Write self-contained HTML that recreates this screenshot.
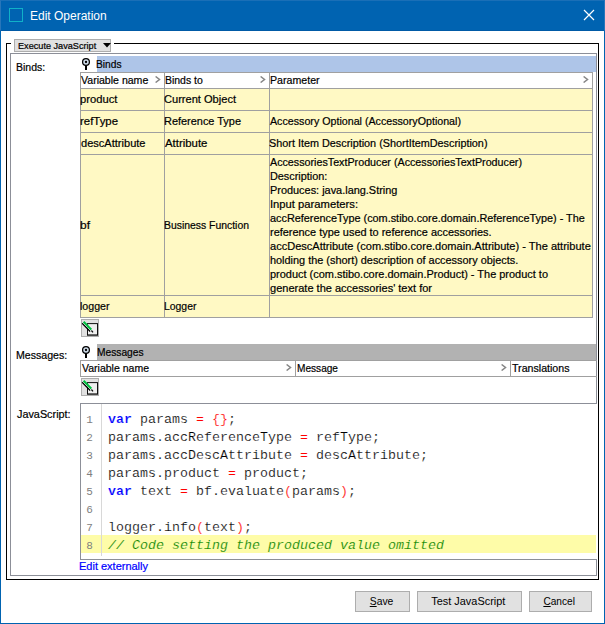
<!DOCTYPE html>
<html><head><meta charset="utf-8">
<style>
*{box-sizing:border-box;margin:0;padding:0}
html,body{width:605px;height:624px;overflow:hidden;background:#fff}
body{font-family:"Liberation Sans",sans-serif;font-size:11px;color:#000;position:relative}
.abs{position:absolute}
.t{position:absolute;white-space:nowrap;line-height:13px;height:13px;transform-origin:0 0;-webkit-text-stroke:0.2px currentColor}
#win{position:absolute;left:0;top:0;width:605px;height:624px;border:1px solid #0063b1;border-top:none}
#title{position:absolute;left:0;top:0;width:605px;height:31px;background:#0063b1;border-top:1px solid #1a6fb7;border-left:1px solid #2876ba;border-right:1px solid #2876ba;border-bottom:1px solid #005aa6}
#title .txt{position:absolute;left:29px;top:8px;color:#fff;font-size:12px;line-height:15px;white-space:nowrap}
.code{font-family:"Liberation Mono",monospace;font-size:13.333px;line-height:20.225px;white-space:pre;position:absolute;transform:scaleY(0.89);transform-origin:0 0;-webkit-text-stroke:0.2px #fff}
.lnum{font-family:"Liberation Mono",monospace;font-size:11px;line-height:18px;white-space:pre;position:absolute;color:#808080}
.kw{color:#0000ff;font-weight:bold}
.rd{color:#ff0000}
.cm{color:#008000;font-style:italic;-webkit-text-stroke-color:#fefca8}
.ln{color:#808080}
.btn{position:absolute;top:591px;height:21px;background:#e1e1e1;border:1px solid #adadad;text-align:center;padding-right:2px;line-height:19px;font-size:11px;white-space:nowrap}
.hl{position:absolute;background:#a0a0a0}
.vl{position:absolute;background:#a0a0a0;width:1px}
</style></head><body>
<div id="win"></div>
<div id="title">
  <div class="abs" style="left:8px;top:7px;width:14px;height:14px;border:1px solid #10b1c8"></div>
  <div class="txt">Edit Operation</div>
  <svg class="abs" style="left:582px;top:8px" width="12" height="12" viewBox="0 0 12 12"><path d="M1 1 L11 11 M11 1 L1 11" stroke="#fff" stroke-width="1.2" fill="none"/></svg>
</div>

<!-- outer black titled border -->
<div class="abs" style="left:6px;top:43px;width:593px;height:537px;border:1px solid #000"></div>
<!-- inner gray border -->
<div class="abs" style="left:10px;top:53px;width:587px;height:523px;border:1px solid #8c8f98"></div>
<!-- combo -->
<div class="abs" style="left:11px;top:38px;width:103px;height:15px;background:#fff"></div>
<div class="abs" style="left:14px;top:39px;width:97px;height:13px;background:#e1e1e1;border:1px solid #adadad"></div>
<svg class="abs" style="left:103px;top:43px" width="8" height="5" viewBox="0 0 8 5"><path d="M0 0 H8 L4 4.5 Z" fill="#000"/></svg>

<!-- Binds header band -->
<div class="abs" style="left:97px;top:56px;width:499px;height:16px;background:#aec5e8"></div>
<svg class="abs" style="left:81px;top:57px" width="11" height="14" viewBox="0 0 11 14"><circle cx="5" cy="5" r="3.4" fill="#cddae8" stroke="#000" stroke-width="1.25"/><circle cx="5" cy="5" r="1.15" fill="#000"/><path d="M5 8.5 V13" stroke="#000" stroke-width="2"/></svg>

<!-- Binds table -->
<div class="abs" style="left:81px;top:89px;width:512px;height:229px;background:#fff9c4"></div>
<div class="hl" style="left:80px;top:72px;width:513px;height:1px"></div>
<div class="hl" style="left:80px;top:88px;width:513px;height:1px"></div>
<div class="hl" style="left:80px;top:110px;width:513px;height:1px"></div>
<div class="hl" style="left:80px;top:132px;width:513px;height:1px"></div>
<div class="hl" style="left:80px;top:154px;width:513px;height:1px"></div>
<div class="hl" style="left:80px;top:295px;width:513px;height:1px"></div>
<div class="hl" style="left:80px;top:317px;width:513px;height:1px"></div>
<div class="vl" style="left:80px;top:72px;height:246px"></div>
<div class="vl" style="left:164px;top:72px;height:246px"></div>
<div class="vl" style="left:269px;top:72px;height:246px"></div>
<div class="vl" style="left:592px;top:72px;height:246px"></div>

<svg class="abs chev" style="left:155px;top:76px" width="6" height="7" viewBox="0 0 6 7"><path d="M0.6 0.5 L4.5 3.5 L0.6 6.5" stroke="#868686" stroke-width="1.5" fill="none"/></svg>
<svg class="abs chev" style="left:260px;top:76px" width="6" height="7" viewBox="0 0 6 7"><path d="M0.6 0.5 L4.5 3.5 L0.6 6.5" stroke="#868686" stroke-width="1.5" fill="none"/></svg>
<svg class="abs chev" style="left:583px;top:76px" width="6" height="7" viewBox="0 0 6 7"><path d="M0.6 0.5 L4.5 3.5 L0.6 6.5" stroke="#868686" stroke-width="1.5" fill="none"/></svg>

<!-- edit icon 1 -->
<svg class="abs" style="left:81px;top:319px" width="18" height="18" viewBox="0 0 18 18"><rect x="0.5" y="0.5" width="17" height="17" fill="#e1e1e1" stroke="#adadad"/><rect x="6.5" y="4.6" width="10" height="11.4" fill="#efefef" stroke="#111"/><path d="M6 16.2 H17" stroke="#000" stroke-width="0.6"/><g transform="translate(0,0.7)"><path d="M1.2 3.5 L9.2 11.7" stroke="#000" stroke-width="1.4"/><path d="M1.9 2.8 L9.7 10.8" stroke="#fff" stroke-width="0.9"/><path d="M2.6 2.1 L10.4 10" stroke="#00c040" stroke-width="2.1"/><path d="M9 11.4 L10.8 9.6 L11.2 11 Z" fill="#fff"/><path d="M10.4 10.8 L12 12.6" stroke="#000" stroke-width="1.2"/></g></svg>

<!-- Messages band -->
<div class="abs" style="left:97px;top:344px;width:499px;height:16px;background:#b2b2b2"></div>
<svg class="abs" style="left:81px;top:345px" width="11" height="14" viewBox="0 0 11 14"><circle cx="5" cy="5" r="3.4" fill="#cddae8" stroke="#000" stroke-width="1.25"/><circle cx="5" cy="5" r="1.15" fill="#000"/><path d="M5 8.5 V13" stroke="#000" stroke-width="2"/></svg>
<div class="hl" style="left:80px;top:360px;width:517px;height:1px"></div>
<div class="hl" style="left:80px;top:376px;width:517px;height:1px"></div>
<div class="vl" style="left:80px;top:360px;height:17px"></div>
<div class="vl" style="left:295px;top:360px;height:17px"></div>
<div class="vl" style="left:510px;top:360px;height:17px"></div>
<svg class="abs chev" style="left:286px;top:364px" width="6" height="7" viewBox="0 0 6 7"><path d="M0.6 0.5 L4.5 3.5 L0.6 6.5" stroke="#868686" stroke-width="1.5" fill="none"/></svg>
<svg class="abs chev" style="left:501px;top:364px" width="6" height="7" viewBox="0 0 6 7"><path d="M0.6 0.5 L4.5 3.5 L0.6 6.5" stroke="#868686" stroke-width="1.5" fill="none"/></svg>
<svg class="abs" style="left:81px;top:378px" width="18" height="18" viewBox="0 0 18 18"><rect x="0.5" y="0.5" width="17" height="17" fill="#e1e1e1" stroke="#adadad"/><rect x="6.5" y="4.6" width="10" height="11.4" fill="#efefef" stroke="#111"/><path d="M6 16.2 H17" stroke="#000" stroke-width="0.6"/><g transform="translate(0,0.7)"><path d="M1.2 3.5 L9.2 11.7" stroke="#000" stroke-width="1.4"/><path d="M1.9 2.8 L9.7 10.8" stroke="#fff" stroke-width="0.9"/><path d="M2.6 2.1 L10.4 10" stroke="#00c040" stroke-width="2.1"/><path d="M9 11.4 L10.8 9.6 L11.2 11 Z" fill="#fff"/><path d="M10.4 10.8 L12 12.6" stroke="#000" stroke-width="1.2"/></g></svg>

<!-- code area -->
<div class="abs" style="left:80px;top:403px;width:517px;height:157px;border:1px solid #8c8f98;border-right:none;background:#fff"></div>
<div class="abs" style="left:81px;top:535px;width:515px;height:18px;background:#fefca8"></div>
<div class="abs" style="left:101px;top:404px;width:1px;height:152px;background:#d8d8d8"></div>
<div class="lnum" style="left:86.3px;top:410.8px">1
2
3
4
5
6
7
8</div>
<div class="code" style="left:108px;top:410.7px"><span class="kw">var</span> params <span class="rd">=</span> <span class="rd">{}</span>;</div>
<div class="code" style="left:108px;top:428.7px">params.accReferenceType <span class="rd">=</span> refType;</div>
<div class="code" style="left:108px;top:446.7px">params.accDescAttribute <span class="rd">=</span> descAttribute;</div>
<div class="code" style="left:108px;top:464.7px">params.product <span class="rd">=</span> product;</div>
<div class="code" style="left:108px;top:482.7px"><span class="kw">var</span> text <span class="rd">=</span> bf.evaluate<span class="rd">(</span>params<span class="rd">)</span>;</div>
<div class="code" style="left:108px;top:518.7px">logger.info<span class="rd">(</span>text<span class="rd">)</span>;</div>
<div class="code" style="left:108px;top:536.7px"><span class="cm">// Code setting the produced value omitted</span></div>

<div class="t" id="t0" style="left:18.2px;top:38.8px;transform:scaleX(0.9745);font-size:9.4px">Execute JavaScript</div>
<div class="t" id="t1" style="left:16.4px;top:61px;transform:scaleX(0.9549);">Binds:</div>
<div class="t" id="t2" style="left:16.4px;top:349px;transform:scaleX(0.9623);">Messages:</div>
<div class="t" id="t3" style="left:17.1px;top:408px;transform:scaleX(0.9849);">JavaScript:</div>
<div class="t" id="t4" style="left:96.3px;top:58px;transform:scaleX(0.9299);">Binds</div>
<div class="t" id="t5" style="left:81.2px;top:74px;transform:scaleX(0.9597);">Variable name</div>
<div class="t" id="t6" style="left:164.5px;top:74px;transform:scaleX(0.9509);">Binds to</div>
<div class="t" id="t7" style="left:269.7px;top:74px;transform:scaleX(0.9657);">Parameter</div>
<div class="t" id="t8" style="left:80.2px;top:93px;transform:scaleX(1.0190);">product</div>
<div class="t" id="t9" style="left:164.4px;top:93px;transform:scaleX(1.0066);">Current Object</div>
<div class="t" id="t10" style="left:80.4px;top:115px;transform:scaleX(1.0358);">refType</div>
<div class="t" id="t11" style="left:164.0px;top:115px;transform:scaleX(0.9939);">Reference Type</div>
<div class="t" id="t12" style="left:270px;top:115px;transform:scaleX(0.9702);">Accessory Optional (AccessoryOptional)</div>
<div class="t" id="t13" style="left:80.7px;top:137px;transform:scaleX(1.0046);">descAttribute</div>
<div class="t" id="t14" style="left:164.6px;top:137px;transform:scaleX(1.0349);">Attribute</div>
<div class="t" id="t15" style="left:269.3px;top:137px;transform:scaleX(0.9846);">Short Item Description (ShortItemDescription)</div>
<div class="t" id="t16" style="left:80.4px;top:219px;transform:scaleX(1.0884);">bf</div>
<div class="t" id="t17" style="left:164.2px;top:219px;transform:scaleX(0.9456);">Business Function</div>
<div class="t" id="t18" style="left:80.4px;top:300px;transform:scaleX(0.9647);">logger</div>
<div class="t" id="t19" style="left:164.2px;top:300px;transform:scaleX(0.9456);">Logger</div>
<div class="t" id="t20" style="left:96.6px;top:346px;transform:scaleX(0.9294);">Messages</div>
<div class="t" id="t21" style="left:81.5px;top:362px;transform:scaleX(0.9554);">Variable name</div>
<div class="t" id="t22" style="left:296.8px;top:362px;transform:scaleX(0.9184);">Message</div>
<div class="t" id="t23" style="left:511.7px;top:362px;transform:scaleX(0.9661);">Translations</div>
<div class="t" id="t24" style="left:79.3px;top:560px;transform:scaleX(0.9986);color:#0000ff">Edit externally</div>
<div class="t" id="t25" style="left:269.6px;top:156px;transform:scaleX(0.9745);">AccessoriesTextProducer (AccessoriesTextProducer)</div>
<div class="t" id="t26" style="left:269.6px;top:170px;transform:scaleX(0.9866);">Description:</div>
<div class="t" id="t27" style="left:269.6px;top:184px;transform:scaleX(0.9920);">Produces: java.lang.String</div>
<div class="t" id="t28" style="left:269.6px;top:198px;transform:scaleX(1.0207);">Input parameters:</div>
<div class="t" id="t29" style="left:269.6px;top:212px;transform:scaleX(0.9870);">accReferenceType (com.stibo.core.domain.ReferenceType) - The</div>
<div class="t" id="t30" style="left:269.6px;top:226px;transform:scaleX(0.9929);">reference type used to reference accessories.</div>
<div class="t" id="t31" style="left:269.6px;top:240px;transform:scaleX(1.0039);">accDescAttribute (com.stibo.core.domain.Attribute) - The attribute</div>
<div class="t" id="t32" style="left:269.6px;top:254px;transform:scaleX(0.9901);">holding the (short) description of accessory objects.</div>
<div class="t" id="t33" style="left:269.6px;top:268px;transform:scaleX(0.9956);">product (com.stibo.core.domain.Product) - The product to</div>
<div class="t" id="t34" style="left:269.6px;top:282px;transform:scaleX(1.0019);">generate the accessories&#x27; text for</div>
<div class="btn" style="left:355px;width:55px"><span id="b0" style="display:inline-block;transform:scaleX(0.9405)"><u>S</u>ave</span></div>
<div class="btn" style="left:417px;width:105px"><span id="b1" style="display:inline-block;transform:scaleX(0.9920)">Test JavaScript</span></div>
<div class="btn" style="left:529px;width:63px"><span id="b2" style="display:inline-block;transform:scaleX(0.9197)"><u>C</u>ancel</span></div>
</body></html>
